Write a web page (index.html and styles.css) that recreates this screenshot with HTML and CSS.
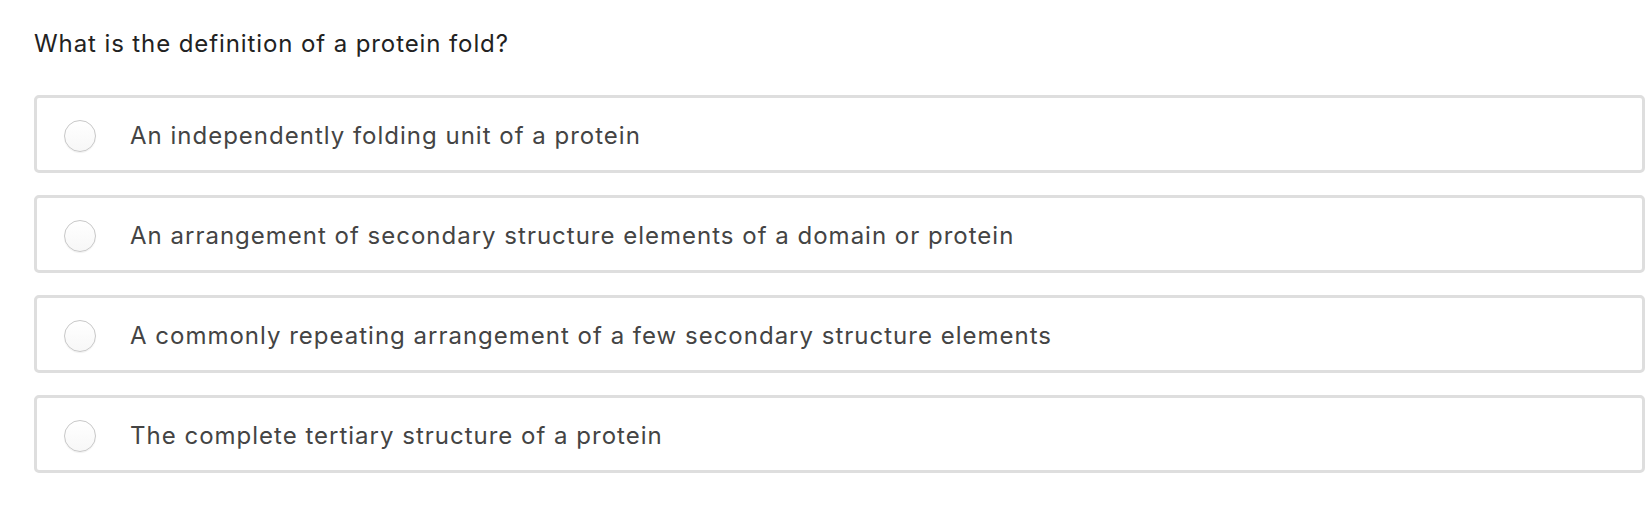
FILE: index.html
```html
<!DOCTYPE html>
<html lang="en">
<head>
<meta charset="utf-8">
<title>Quiz</title>
<link rel="stylesheet" href="styles.css">
</head>
<body>
<div class="quiz">
  <div class="question">What is the definition of a protein fold?</div>
  <div class="options">
    <label class="option"><span class="radio"></span><span class="label">An independently folding unit of a protein</span></label>
    <label class="option"><span class="radio"></span><span class="label">An arrangement of secondary structure elements of a domain or protein</span></label>
    <label class="option"><span class="radio"></span><span class="label">A commonly repeating arrangement of a few secondary structure elements</span></label>
    <label class="option"><span class="radio"></span><span class="label">The complete tertiary structure of a protein</span></label>
  </div>
</div>
</body>
</html>
```
FILE: styles.css
```css
html, body {
  margin: 0;
  padding: 0;
  background: #ffffff;
}
body {
  font-family: Inter, "Noto Sans", sans-serif;
}
.quiz {
  padding: 28px 5px 0 34px;
}
.question {
  font-size: 24px;
  line-height: 31px;
  letter-spacing: 0.9px;
  color: #222222;
}
.options {
  margin-top: 36px;
  display: flex;
  flex-direction: column;
  gap: 22px;
}
.option {
  display: flex;
  align-items: center;
  height: 72px;
  border: 3px solid #dedede;
  border-radius: 5px;
  padding-left: 27px;
  box-sizing: content-box;
}
.radio {
  width: 30px;
  height: 30px;
  border: 1px solid #c8c8c8;
  border-radius: 50%;
  background: linear-gradient(#ffffff, #f7f7f7);
  box-shadow: 0 1px 1px rgba(0,0,0,0.06);
  flex: none;
  margin-top: 4px;
}
.label {
  margin-left: 34px;
  margin-top: 2px;
  font-size: 24px;
  letter-spacing: 1px;
  color: #444444;
}
```
